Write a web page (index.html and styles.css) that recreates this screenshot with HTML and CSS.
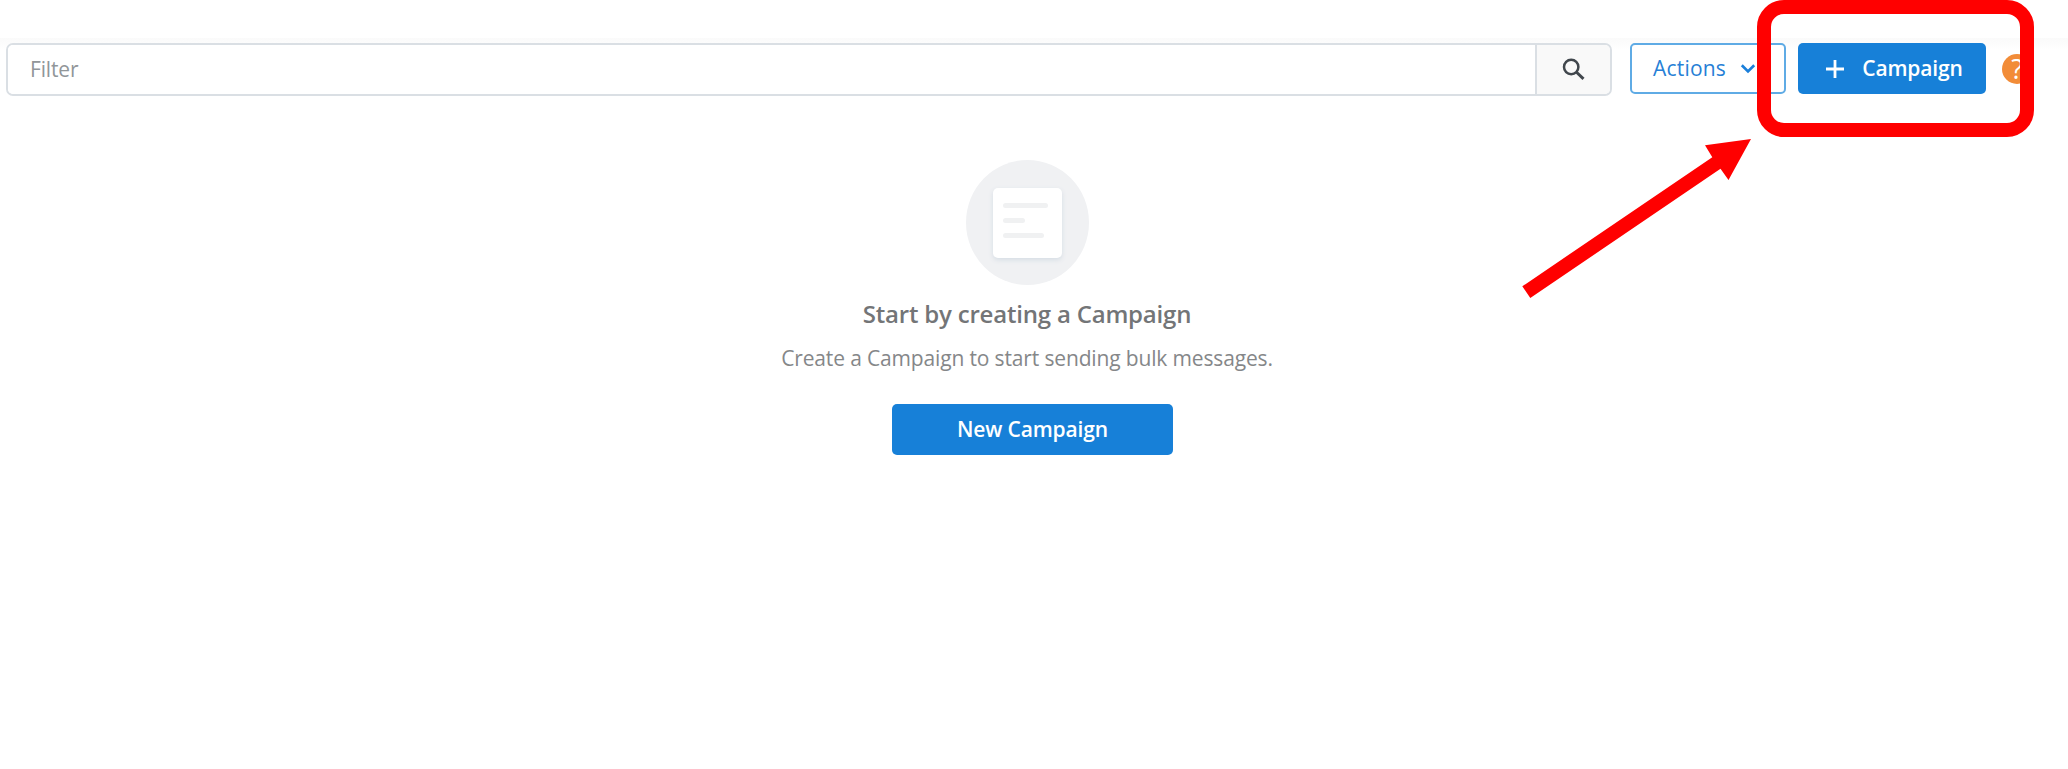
FILE: index.html
```html
<!DOCTYPE html>
<html lang="en">
<head>
<meta charset="utf-8">
<title>Campaigns</title>
<link rel="stylesheet" href="styles.css">
</head>
<body>
<header class="toolbar">
  <div class="filter">
    <div class="filter-field">Filter</div>
    <div class="filter-search">
      <svg width="24" height="24" viewBox="0 0 24 24" fill="none" stroke="#41474d"><circle cx="9.2" cy="9" r="7.2" stroke-width="2.5"/><path d="M14.3 14l7.2 6.8" stroke-width="3"/></svg>
    </div>
  </div>
  <div class="btn btn-outline">
    <span>Actions</span>
    <svg width="16" height="12" viewBox="0 0 16 12" fill="none" stroke="#1b7fda" stroke-width="2.7"><path d="M1.8 3.2L8 9.4l6.2-6.2"/></svg>
  </div>
  <div class="btn btn-primary btn-add">
    <svg width="20" height="21" viewBox="0 0 20 21" stroke="#fff" stroke-width="2.8"><path d="M10 2v18M1 11h18"/></svg>
    <span>Campaign</span>
  </div>
  <div class="help">?</div>
</header>
<main class="empty">
  <div class="empty-art">
    <div class="card"><i class="line line-long"></i><i class="line line-short"></i><i class="line line-mid"></i></div>
  </div>
  <h1 class="empty-title">Start by creating a Campaign</h1>
  <p class="empty-text">Create a Campaign to start sending bulk messages.</p>
  <div class="btn btn-primary btn-new">New Campaign</div>
</main>
<div class="highlight"></div>
<svg class="arrow" width="240" height="170" viewBox="1515 130 240 170"><path fill="#f00" d="M1522.3 286.3L1712.3 157.2L1705 145.2L1751 139L1728.5 180L1720.5 168.8L1530.3 298Z"/></svg>
</body>
</html>
```
FILE: styles.css
```css
* { box-sizing: border-box; }
body {
  margin: 0;
  height: 769px;
  overflow: hidden;
  background: #fff;
  font-family: "Open Sans", "Noto Sans", sans-serif;
  font-size: 21px;
  letter-spacing: -0.15px;
}
.toolbar {
  display: flex;
  align-items: flex-start;
  margin-top: 38px;
  padding: 5px 0 0 6px;
  background: linear-gradient(#fafafa, #fff 12px);
}
.filter {
  display: flex;
  width: 1606px;
  height: 53px;
  border: 2px solid #dadfe4;
  border-radius: 7px;
  overflow: hidden;
}
.filter-field {
  flex: 1;
  padding-left: 22px;
  line-height: 49px;
  color: #919699;
  background: #fff;
}
.filter-search {
  display: flex;
  align-items: center;
  justify-content: center;
  width: 75px;
  border-left: 2px solid #dadfe4;
  background: #f9f9f9;
}
.btn {
  display: flex;
  align-items: center;
  justify-content: center;
  height: 51px;
  padding-bottom: 1px;
  border-radius: 5px;
  font-weight: 600;
}
.btn-outline {
  width: 156px;
  margin-left: 18px;
  padding: 0 28px 1px 21px;
  justify-content: space-between;
  border: 2px solid #5fabe5;
  background: #fff;
  color: #277fd6;
  font-weight: 500;
  letter-spacing: 0.2px;
}
.btn-primary { background: #1780d8; color: #fff; }
.btn-add {
  width: 188px;
  margin-left: 12px;
  gap: 17px;
  padding-left: 4px;
}
.help {
  width: 30px;
  height: 30px;
  margin: 11px 0 0 16px;
  border-radius: 50%;
  background: #f28c38;
  color: #fff;
  font-size: 27px;
  font-weight: 500;
  line-height: 30px;
  text-align: center;
}
.empty {
  display: flex;
  flex-direction: column;
  align-items: center;
  width: 2054px;
  margin-top: 64px;
}
.empty-art {
  display: flex;
  align-items: center;
  justify-content: center;
  width: 123px;
  height: 125px;
  border-radius: 50%;
  background: #f0f1f3;
}
.card {
  width: 69px;
  height: 70px;
  padding: 15px 10px;
  border-radius: 5px;
  background: #fff;
  box-shadow: 0 2px 5px #d5dde4;
}
.line {
  display: block;
  height: 5px;
  margin-bottom: 10px;
  border-radius: 3px;
  background: #f0f1f2;
}
.line-long { width: 45px; }
.line-short { width: 22px; }
.line-mid { width: 41px; }
.empty-title {
  margin: 12px 0 0;
  font-size: 24px;
  font-weight: 600;
  line-height: 34px;
  letter-spacing: -0.2px;
  color: #737577;
}
.empty-text {
  margin: 12px 0 0;
  line-height: 30px;
  color: #858789;
}
.btn-new { width: 281px; margin: 31px 0 0 11px; }
.highlight {
  position: absolute;
  left: 1757px;
  top: 0;
  width: 277px;
  height: 137px;
  border: 14px solid #f00;
  border-radius: 27px;
}
.arrow { position: absolute; left: 1515px; top: 130px; }
```
